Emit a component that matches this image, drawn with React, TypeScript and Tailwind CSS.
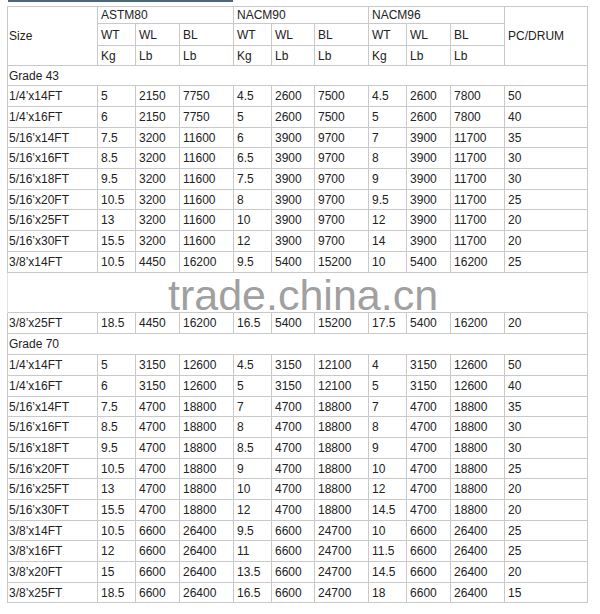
const GRADE_43: string[][] = [
  ["1/4’x14FT", "5", "2150", "7750", "4.5", "2600", "7500", "4.5", "2600", "7800", "50"],
  ["1/4’x16FT", "6", "2150", "7750", "5", "2600", "7500", "5", "2600", "7800", "40"],
  ["5/16’x14FT", "7.5", "3200", "11600", "6", "3900", "9700", "7", "3900", "11700", "35"],
  ["5/16’x16FT", "8.5", "3200", "11600", "6.5", "3900", "9700", "8", "3900", "11700", "30"],
  ["5/16’x18FT", "9.5", "3200", "11600", "7.5", "3900", "9700", "9", "3900", "11700", "30"],
  ["5/16’x20FT", "10.5", "3200", "11600", "8", "3900", "9700", "9.5", "3900", "11700", "25"],
  ["5/16’x25FT", "13", "3200", "11600", "10", "3900", "9700", "12", "3900", "11700", "20"],
  ["5/16’x30FT", "15.5", "3200", "11600", "12", "3900", "9700", "14", "3900", "11700", "20"],
  ["3/8’x14FT", "10.5", "4450", "16200", "9.5", "5400", "15200", "10", "5400", "16200", "25"],
];

const GRADE_43_TAIL: string[] = ["3/8’x25FT", "18.5", "4450", "16200", "16.5", "5400", "15200", "17.5", "5400", "16200", "20"];

const GRADE_70: string[][] = [
  ["1/4’x14FT", "5", "3150", "12600", "4.5", "3150", "12100", "4", "3150", "12600", "50"],
  ["1/4’x16FT", "6", "3150", "12600", "5", "3150", "12100", "5", "3150", "12600", "40"],
  ["5/16’x14FT", "7.5", "4700", "18800", "7", "4700", "18800", "7", "4700", "18800", "35"],
  ["5/16’x16FT", "8.5", "4700", "18800", "8", "4700", "18800", "8", "4700", "18800", "30"],
  ["5/16’x18FT", "9.5", "4700", "18800", "8.5", "4700", "18800", "9", "4700", "18800", "30"],
  ["5/16’x20FT", "10.5", "4700", "18800", "9", "4700", "18800", "10", "4700", "18800", "25"],
  ["5/16’x25FT", "13", "4700", "18800", "10", "4700", "18800", "12", "4700", "18800", "20"],
  ["5/16’x30FT", "15.5", "4700", "18800", "12", "4700", "18800", "14.5", "4700", "18800", "20"],
  ["3/8’x14FT", "10.5", "6600", "26400", "9.5", "6600", "24700", "10", "6600", "26400", "25"],
  ["3/8’x16FT", "12", "6600", "26400", "11", "6600", "24700", "11.5", "6600", "26400", "25"],
  ["3/8’x20FT", "15", "6600", "26400", "13.5", "6600", "24700", "14.5", "6600", "26400", "20"],
  ["3/8’x25FT", "18.5", "6600", "26400", "16.5", "6600", "24700", "18", "6600", "26400", "15"],
];

const COLS = [90, 38, 44, 54, 38, 43, 54, 38, 44, 54, 83];

const cell = "border border-[#c9c9c9] px-[2px] py-0 text-left align-middle whitespace-nowrap font-normal";

function DataRow({ row, tall }: { row: string[]; tall: boolean }) {
  return (
    <tr className={tall ? "h-[21px]" : "h-[20px]"}>
      {row.map((value, i) => (
        <td key={i} className={i === 0 ? `${cell} pl-[1px]` : `${cell} pl-[3px]`}>
          {value}
        </td>
      ))}
    </tr>
  );
}

function GradeRow({ label, tall }: { label: string; tall: boolean }) {
  return (
    <tr className={tall ? "h-[21px]" : "h-[20px]"}>
      <td colSpan={11} className={`${cell} pl-[1px]`}>
        {label}
      </td>
    </tr>
  );
}

export default function App() {
  return (
    <div className="w-[600px] h-[614px] bg-white text-[12px] leading-[14px] text-[#222] font-['Liberation_Sans',Arial,sans-serif]">
      <div className="ml-[8px] h-[2px] w-[225px] bg-[#4b6878]" />
      <div className="pt-[4px] pl-[7px]">
        <table className="table-fixed border-collapse w-[581px]">
          <colgroup>
            {COLS.map((w, i) => (
              <col key={i} style={{ width: w }} />
            ))}
          </colgroup>
          <thead>
            <tr className="h-[17px]">
              <th rowSpan={3} className={`${cell} pl-[1px]`}>
                Size
              </th>
              <th colSpan={3} className={`${cell} pl-[3px]`}>
                ASTM80
              </th>
              <th colSpan={3} className={`${cell} pl-[3px]`}>
                NACM90
              </th>
              <th colSpan={3} className={`${cell} pl-[3px]`}>
                NACM96
              </th>
              <th rowSpan={3} className={`${cell} pl-[3px]`}>
                PC/DRUM
              </th>
            </tr>
            <tr className="h-[22px]">
              {["WT", "WL", "BL", "WT", "WL", "BL", "WT", "WL", "BL"].map((h, i) => (
                <th key={i} className={`${cell} pl-[3px]`}>
                  {h}
                </th>
              ))}
            </tr>
            <tr className="h-[20px]">
              {["Kg", "Lb", "Lb", "Kg", "Lb", "Lb", "Kg", "Lb", "Lb"].map((h, i) => (
                <th key={i} className={`${cell} pl-[3px]`}>
                  {h}
                </th>
              ))}
            </tr>
          </thead>
          <tbody>
            <GradeRow label="Grade 43" tall={false} />
            {GRADE_43.map((row, i) => (
              <DataRow key={i} row={row} tall={i % 3 !== 2 || i === 8} />
            ))}
            <tr>
              <td colSpan={11} className="border-x border-[#e4e4e4] p-0">
                <div className="h-[39px] pl-[160px] pt-[8px]">
                  <span className="block text-[43px] leading-[28px] text-[#a0a0a0] whitespace-nowrap">
                    trade.china.cn
                  </span>
                </div>
              </td>
            </tr>
            <DataRow row={GRADE_43_TAIL} tall={true} />
            <GradeRow label="Grade 70" tall={true} />
            {GRADE_70.map((row, i) => (
              <DataRow key={i} row={row} tall={i % 3 !== 2} />
            ))}
          </tbody>
        </table>
      </div>
    </div>
  );
}
